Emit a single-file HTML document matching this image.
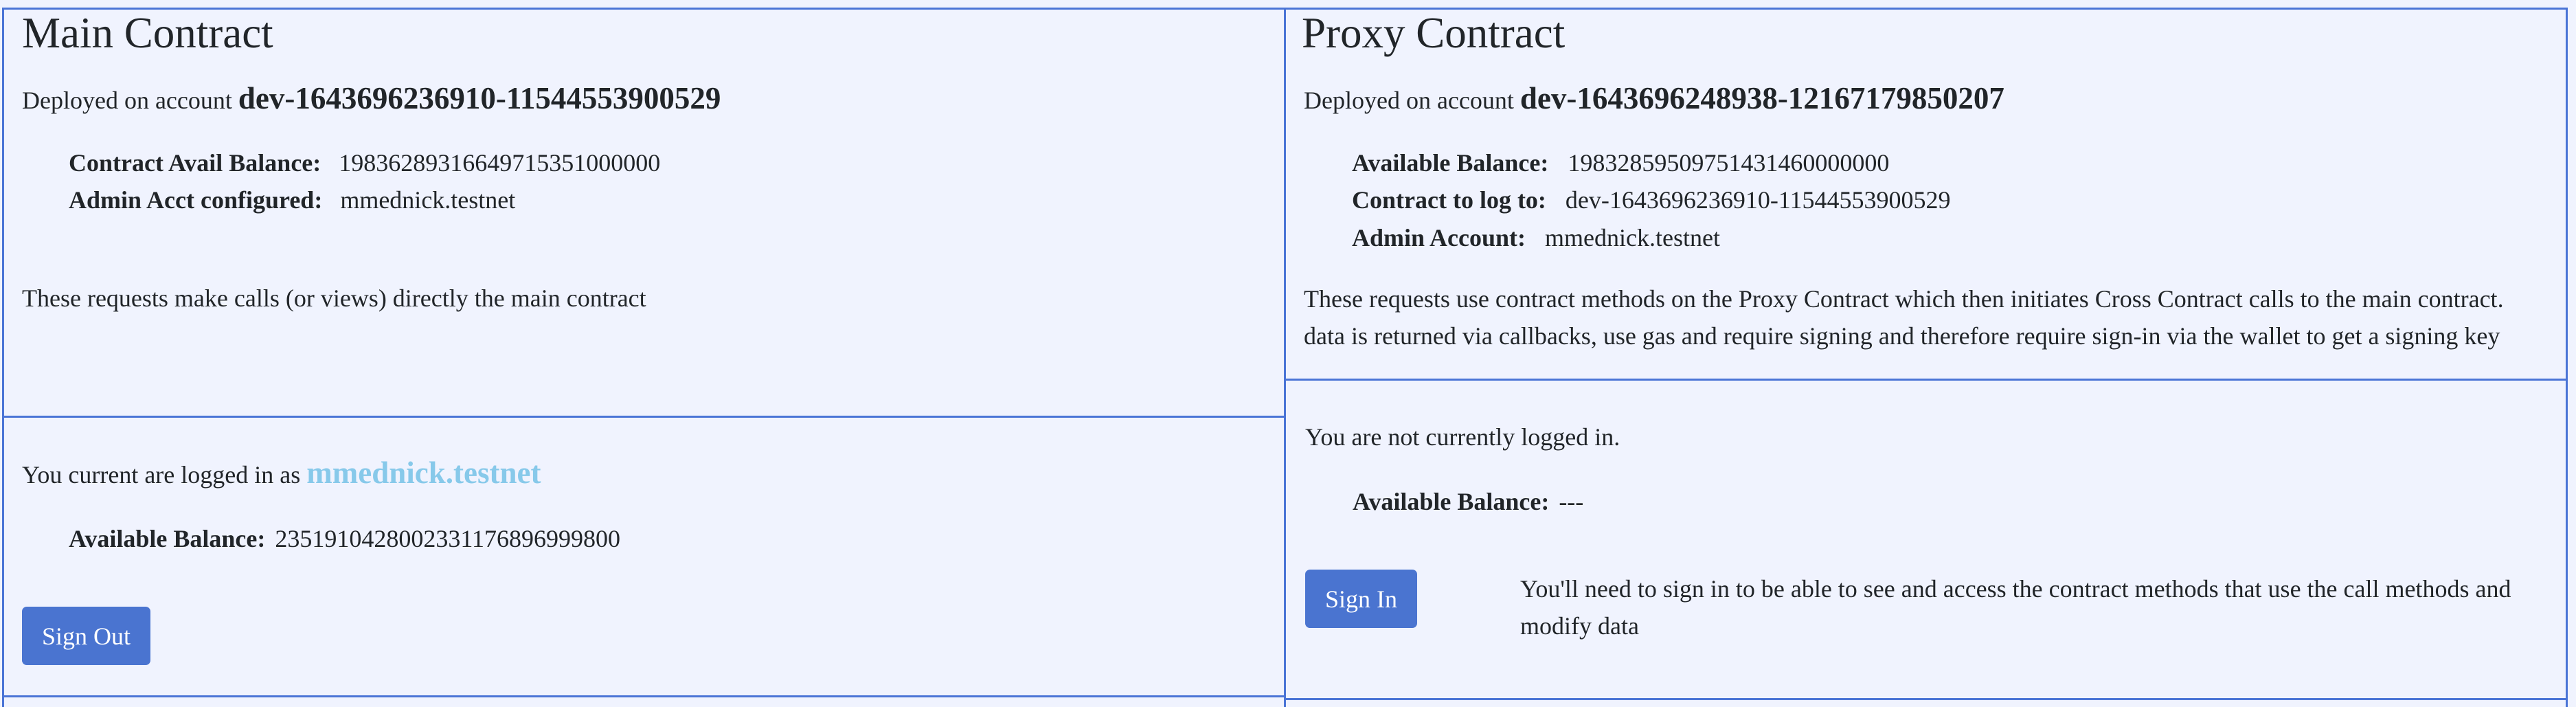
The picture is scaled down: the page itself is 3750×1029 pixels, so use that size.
<!DOCTYPE html>
<html><head><meta charset="utf-8"><style>
html,body{margin:0;padding:0}
body{width:3750px;height:1029px;background:#f0f3fe;position:relative;overflow:hidden;font-family:"Liberation Serif",serif;color:#212529;font-size:36px}
.b{position:absolute;background:#4a74d6}
.t{position:absolute;white-space:nowrap;line-height:1}
.h{font-size:63px}
.dev{font-size:45px;font-weight:bold}
.btn{position:absolute;background:#4a74d0;color:#fff;border-radius:7px;font-size:36px;display:flex;align-items:center;justify-content:center}
</style></head><body>
<div class="b" style="left:3px;top:11px;width:3735px;height:3px"></div>
<div class="b" style="left:3px;top:11px;width:3px;height:1018px"></div>
<div class="b" style="left:1869px;top:11px;width:3px;height:1018px"></div>
<div class="b" style="left:3735px;top:11px;width:3px;height:1018px"></div>
<div class="b" style="left:3px;top:605px;width:1868px;height:3px"></div>
<div class="b" style="left:3px;top:1012px;width:1868px;height:3px"></div>
<div class="b" style="left:1869px;top:551px;width:1869px;height:3px"></div>
<div class="b" style="left:1869px;top:1016px;width:1869px;height:3px"></div>

<div class="t h" style="left:32px;top:17px">Main Contract</div>
<div class="t" style="left:32px;top:121px">Deployed on account <span class="dev">dev-1643696236910-11544553900529</span></div>
<div class="t" style="left:100px;top:219px"><b>Contract Avail Balance:</b><span style="margin-left:26px">19836289316649715351000000</span></div>
<div class="t" style="left:100px;top:273px"><b>Admin Acct configured:</b><span style="margin-left:26px">mmednick.testnet</span></div>
<div class="t" style="left:32px;top:416px">These requests make calls (or views) directly the main contract</div>
<div class="t" style="left:32px;top:666px">You current are logged in as <b style="color:#87c9ea;font-size:45px">mmednick.testnet</b></div>
<div class="t" style="left:100px;top:766px"><b>Available Balance:</b><span style="margin-left:14px">2351910428002331176896999800</span></div>
<div class="btn" style="left:32px;top:883px;width:187px;height:85px">Sign Out</div>

<div class="t h" style="left:1895px;top:17px">Proxy Contract</div>
<div class="t" style="left:1898px;top:121px">Deployed on account <span class="dev">dev-1643696248938-12167179850207</span></div>
<div class="t" style="left:1968px;top:219px"><b>Available Balance:</b><span style="margin-left:28px">19832859509751431460000000</span></div>
<div class="t" style="left:1968px;top:273px"><b>Contract to log to:</b><span style="margin-left:28px">dev-1643696236910-11544553900529</span></div>
<div class="t" style="left:1968px;top:328px"><b>Admin Account:</b><span style="margin-left:28px">mmednick.testnet</span></div>
<div class="t" style="left:1898px;top:417px">These requests use contract methods on the Proxy Contract which then initiates Cross Contract calls to the main contract.</div>
<div class="t" style="left:1898px;top:471px">data is returned via callbacks, use gas and require signing and therefore require sign-in via the wallet to get a signing key</div>
<div class="t" style="left:1900px;top:618px">You are not currently logged in.</div>
<div class="t" style="left:1969px;top:712px"><b>Available Balance:</b><span style="margin-left:14px">---</span></div>
<div class="btn" style="left:1900px;top:829px;width:163px;height:85px">Sign In</div>
<div class="t" style="left:2213px;top:839px">You'll need to sign in to be able to see and access the contract methods that use the call methods and</div>
<div class="t" style="left:2213px;top:893px">modify data</div>
</body></html>
